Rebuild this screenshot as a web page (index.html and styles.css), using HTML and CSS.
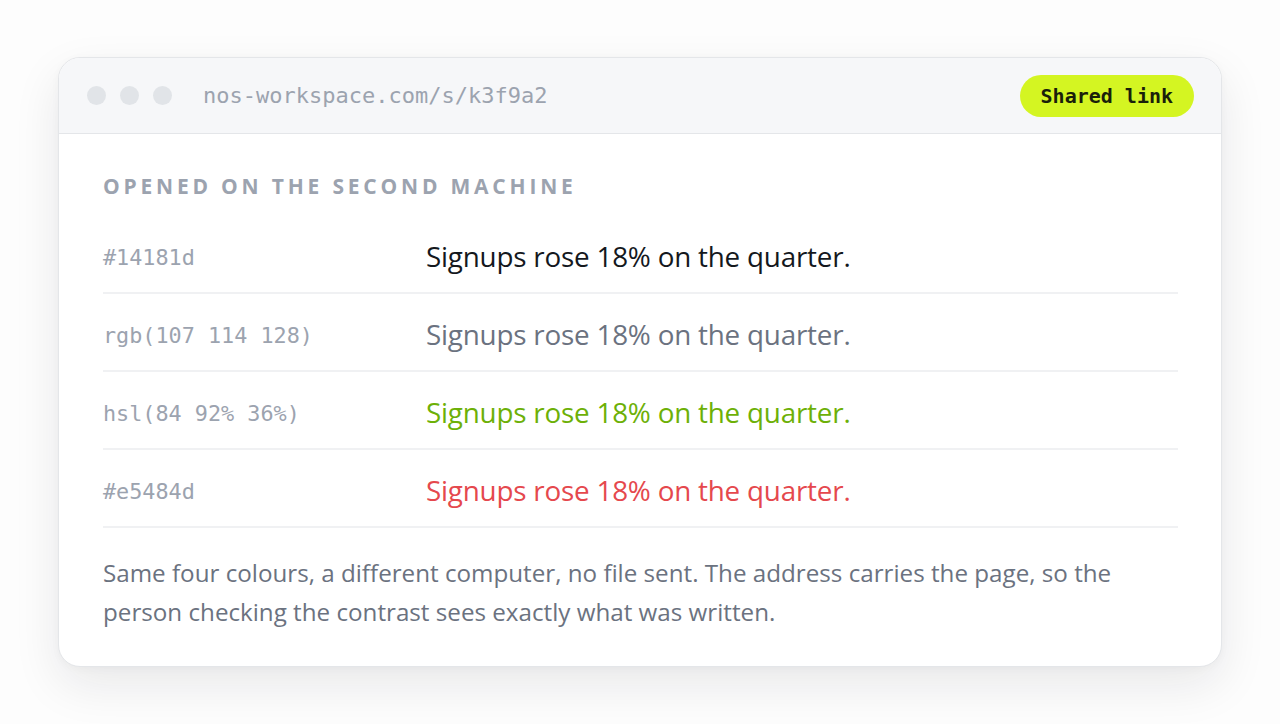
FILE: index.html
```html
<!DOCTYPE html>
<html lang="en">
<head>
  <meta charset="utf-8">
  <meta name="viewport" content="width=device-width, initial-scale=1">
  <title>Shared link</title>
  <link rel="stylesheet" href="styles.css">
</head>
<body>
  <div class="window">
    <div class="titlebar">
      <div class="dots">
        <span class="dot"></span>
        <span class="dot"></span>
        <span class="dot"></span>
      </div>
      <div class="address">nos-workspace.com/s/k3f9a2</div>
      <div class="badge">Shared link</div>
    </div>
    <div class="content">
      <h2 class="label">Opened on the second machine</h2>
      <div class="swatches">
        <div class="row">
          <code class="value">#14181d</code>
          <span class="sample ink">Signups rose 18% on the quarter.</span>
        </div>
        <div class="row">
          <code class="value">rgb(107 114 128)</code>
          <span class="sample muted">Signups rose 18% on the quarter.</span>
        </div>
        <div class="row">
          <code class="value">hsl(84 92% 36%)</code>
          <span class="sample green">Signups rose 18% on the quarter.</span>
        </div>
        <div class="row">
          <code class="value">#e5484d</code>
          <span class="sample red">Signups rose 18% on the quarter.</span>
        </div>
      </div>
      <p class="note">Same four colours, a different computer, no file sent. The address carries the page, so the person checking the contrast sees exactly what was written.</p>
    </div>
  </div>
</body>
</html>
```

FILE: styles.css
```css
* {
  box-sizing: border-box;
}
body {
  margin: 0;
  height: 724px;
  padding: 57px 58px 58px;
  background: #fdfdfd;
  font-family: "Open Sans", "Noto Sans", sans-serif;
}
.window {
  background: #fff;
  border: 1.5px solid #e4e6e9;
  border-radius: 22px;
  overflow: hidden;
  box-shadow: 0 18px 48px rgba(20, 24, 29, 0.09), 0 2px 8px rgba(20, 24, 29, 0.03);
}
.titlebar {
  height: 76px;
  display: flex;
  align-items: center;
  padding: 0 27px 0 28px;
  background: #f6f7f9;
  border-bottom: 1.5px solid #e4e6e9;
}
.dots {
  display: flex;
  gap: 14px;
}
.dot {
  width: 19px;
  height: 19px;
  border-radius: 50%;
  background: #e1e4e8;
}
.address {
  margin-left: 31px;
  flex: 1;
  font-family: "DejaVu Sans Mono", monospace;
  font-size: 22px;
  color: #9ca3af;
}
.badge {
  height: 42px;
  padding: 0 21px;
  display: flex;
  align-items: center;
  border-radius: 21px;
  background: #d4f522;
  color: #1a1f0a;
  font-family: "DejaVu Sans Mono", monospace;
  font-weight: bold;
  font-size: 20px;
}
.content {
  padding: 38px 43px 35px 44px;
}
.label {
  margin: 0 0 16px;
  font-size: 21px;
  line-height: 28px;
  font-weight: 700;
  letter-spacing: 3.8px;
  text-transform: uppercase;
  color: #9ca3af;
}
.row {
  height: 78px;
  padding-top: 4px;
  display: flex;
  align-items: center;
  border-bottom: 2px solid #f0f1f3;
}
.value {
  width: 323px;
  flex: none;
  padding-top: 3px;
  font-family: "DejaVu Sans Mono", monospace;
  font-size: 21.8px;
  color: #9ca3af;
}
.sample {
  font-size: 27.8px;
  letter-spacing: -0.2px;
}
.ink { color: #14181d; }
.muted { color: rgb(107 114 128); }
.green { color: hsl(84 92% 36%); }
.red { color: #e5484d; }
.note {
  margin: 25px 0 0;
  font-size: 24.2px;
  line-height: 39px;
  color: #6b7280;
}
```
